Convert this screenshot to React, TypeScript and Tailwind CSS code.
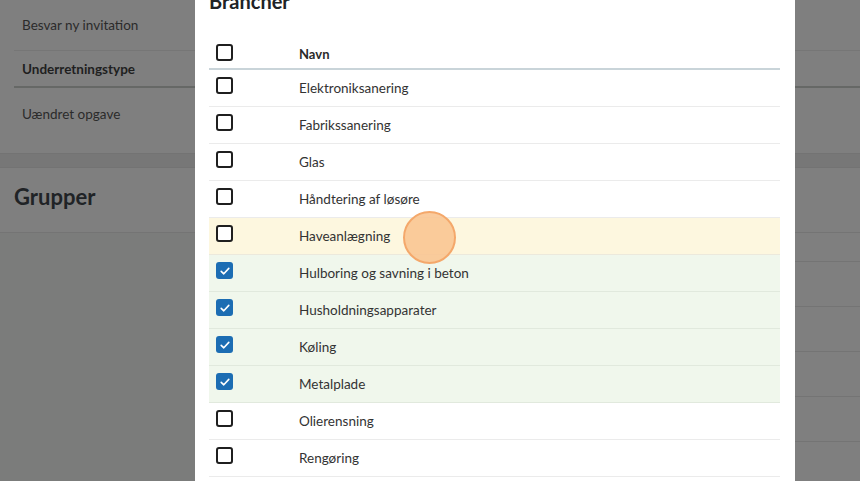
import React from "react";

const rows: { name: string; checked: boolean; tone: "none" | "hover" | "sel" }[] = [
  { name: "Elektroniksanering", checked: false, tone: "none" },
  { name: "Fabrikssanering", checked: false, tone: "none" },
  { name: "Glas", checked: false, tone: "none" },
  { name: "Håndtering af løsøre", checked: false, tone: "none" },
  { name: "Haveanlægning", checked: false, tone: "hover" },
  { name: "Hulboring og savning i beton", checked: true, tone: "sel" },
  { name: "Husholdningsapparater", checked: true, tone: "sel" },
  { name: "Køling", checked: true, tone: "sel" },
  { name: "Metalplade", checked: true, tone: "sel" },
  { name: "Olierensning", checked: false, tone: "none" },
  { name: "Rengøring", checked: false, tone: "none" },
];

function Box({ checked }: { checked: boolean }) {
  if (checked) {
    return (
      <span className="flex h-[17px] w-[17px] items-center justify-center rounded-[3px] bg-[#1c6db3]">
        <svg width="12" height="12" viewBox="0 0 12 12" fill="none">
          <path d="M2.2 6.3 L4.8 8.8 L9.8 3.4" stroke="white" strokeWidth="1.6" strokeLinecap="round" strokeLinejoin="round" />
        </svg>
      </span>
    );
  }
  return <span className="block h-[17px] w-[17px] rounded-[3px] border-2 border-[#1f1f1f] bg-white" />;
}

export default function App() {
  return (
    <div
      className="relative h-[481px] w-[860px] overflow-hidden bg-[#7f7f7f]"
      style={{ fontFamily: "Lato, 'Open Sans', sans-serif" }}
    >
      {/* dimmed page */}
      <div className="flex flex-col">
        <div className="flex flex-col pl-[14px]">
          <div className="flex h-[51px] items-center border-b border-[#767676] pl-[8px] text-[13.5px] text-[#2b2b2b]">
            Besvar ny invitation
          </div>
          <div className="flex h-[37px] items-center border-b-2 border-[#666866] pl-[8px] pt-[2px] text-[13.5px] font-bold text-[#1f1f1f]">
            Underretningstype
          </div>
          <div className="flex h-[55px] items-center pb-[2px] pl-[8px] text-[13.5px] text-[#2b2b2b]">
            Uændret opgave
          </div>
          <div className="h-[10px]" />
        </div>
        <div className="h-[15px] border-y border-[#737373] bg-[#777777]" />
        <div className="flex h-[65px] items-center border-b border-[#747474] pb-[8px] pl-[14px] text-[22px] font-bold text-[#202326]">
          Grupper
        </div>
        <div className="flex">
          <div className="h-[250px] w-[195px] bg-[#7b7c7b]" />
          <div className="flex flex-1 flex-col">
            <div className="h-[29px] border-b border-[#747474]" />
            <div className="h-[45px] border-b border-[#747474]" />
            <div className="h-[45px] border-b border-[#747474]" />
            <div className="h-[45px] border-b border-[#747474]" />
            <div className="h-[45px] border-b border-[#747474]" />
          </div>
        </div>
      </div>

      {/* modal */}
      <div className="absolute left-[195px] top-0 h-[481px] w-[600px] bg-white pl-[14px] pr-[15px]">
        <div className="mt-[-13px] text-[20px] font-bold leading-[28px] text-[#202326]">Brancher</div>
        <div className="mt-[29px] flex h-[26px] items-start border-b-2 border-[#c9d4d9]">
          <div className="w-[90px] pl-[7px]">
            <Box checked={false} />
          </div>
          <div className="pt-[1px] text-[13px] font-bold text-[#2a2a2a]">Navn</div>
        </div>
        {rows.map((r) => (
          <div
            key={r.name}
            className={
              "flex h-[37px] items-center border-b " +
              (r.tone === "hover"
                ? "border-[#ece9dc] bg-[#fdf7df]"
                : r.tone === "sel"
                ? "border-[#e1e9dd] bg-[#f0f7ec]"
                : "border-[#ebebeb] bg-white")
            }
          >
            <div className="w-[90px] self-start pl-[7px] pt-[7px]">
              <Box checked={r.checked} />
            </div>
            <div className="text-[13.5px] text-[#333333]">{r.name}</div>
          </div>
        ))}
      </div>

      {/* click indicator */}
      <div className="absolute left-[403px] top-[211px] h-[53px] w-[53px] rounded-full border-2 border-[#f4a86b] bg-[#fac592]/90" />
    </div>
  );
}
